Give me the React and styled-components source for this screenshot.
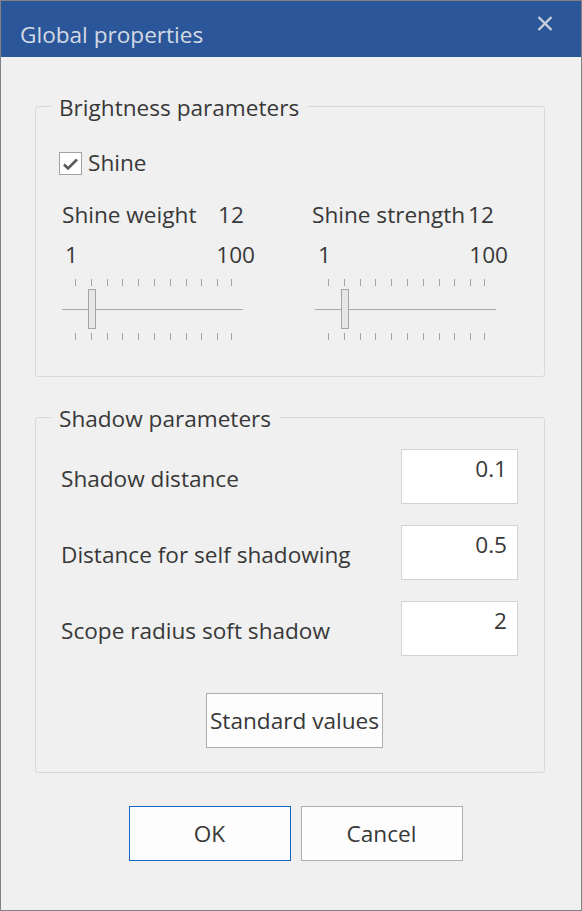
import React from "react";
import styled, { createGlobalStyle } from "styled-components";

const GlobalStyle = createGlobalStyle`
  html, body {
    margin: 0;
    padding: 0;
    background: #f0f0f0;
  }
  body {
    font-family: "Open Sans", "Noto Sans", "Liberation Sans", sans-serif;
    font-size: 22.6px;
    line-height: 30px;
    color: #383838;
  }
`;

// ticks sit at value 1, 11, 21 ... 91 and 100
const tickValues = [1, 11, 21, 31, 41, 51, 61, 71, 81, 91, 100];
const valueToX = (v) => 13 + (v - 1) * 1.58;

const Ticks = () => (
  <TickSvg width="181" height="7" viewBox="0 0 181 7">
    {tickValues.map((v) => (
      <line
        key={v}
        x1={Math.round(valueToX(v)) + 0.5}
        x2={Math.round(valueToX(v)) + 0.5}
        y1="0"
        y2="7"
        stroke="#a3a3a3"
        strokeWidth="1"
      />
    ))}
  </TickSvg>
);

const Slider = ({ value }) => (
  <SliderWrap>
    <Ticks />
    <TrackArea>
      <Track />
      <Thumb style={{ left: Math.round(valueToX(value)) - 4 }} />
    </TrackArea>
    <Ticks />
  </SliderWrap>
);

const SliderColumn = ({ label, value, shift }) => (
  <Column>
    <LabelRow $shift={shift}>
      <SliderLabel>{label}</SliderLabel>
      <span>{value}</span>
    </LabelRow>
    <RangeRow>
      <span>1</span>
      <span>100</span>
    </RangeRow>
    <Slider value={value} />
  </Column>
);

const FieldRow = ({ label, value }) => (
  <Row>
    <RowLabel>{label}</RowLabel>
    <ValueInput readOnly value={value} />
  </Row>
);

export default function App() {
  return (
    <>
      <GlobalStyle />
      <Window>
        <TitleBar>
          <Title>Global properties</Title>
          <CloseButton aria-label="Close">
            <svg width="16" height="15" viewBox="0 0 16 15">
              <path
                d="M1.5 1 L14.5 14 M14.5 1 L1.5 14"
                stroke="#c9cfd8"
                strokeWidth="2.4"
                fill="none"
              />
            </svg>
          </CloseButton>
        </TitleBar>

        <Body>
          <Group>
            <Legend>Brightness parameters</Legend>
            <BrightnessContent>
              <CheckRow>
                <CheckBox>
                  <svg width="21" height="21" viewBox="0 0 21 21">
                    <polyline
                      points="4,11.5 8,15.5 17,6.5"
                      stroke="#5a5a5a"
                      strokeWidth="2.6"
                      fill="none"
                    />
                  </svg>
                </CheckBox>
                <span>Shine</span>
              </CheckRow>
              <Columns>
                <SliderColumn label="Shine weight" value={12} shift={0} />
                <SliderColumn label="Shine strength" value={12} shift={-3} />
              </Columns>
            </BrightnessContent>
          </Group>

          <Group $spaced>
            <Legend>Shadow parameters</Legend>
            <ShadowContent>
              <FieldRow label="Shadow distance" value="0.1" />
              <FieldRow label="Distance for self shadowing" value="0.5" />
              <FieldRow label="Scope radius soft shadow" value="2" />
              <ResetRow>
                <Button $compact>Standard values</Button>
              </ResetRow>
            </ShadowContent>
          </Group>

          <Footer>
            <Button $primary>OK</Button>
            <Button>Cancel</Button>
          </Footer>
        </Body>
      </Window>
    </>
  );
}

const Window = styled.div`
  box-sizing: border-box;
  width: 582px;
  height: 911px;
  border: 1px solid #828282;
  background: #f0f0f0;
  display: flex;
  flex-direction: column;
`;

const TitleBar = styled.div`
  height: 56px;
  background: #2b579a;
  display: flex;
  justify-content: space-between;
  align-items: flex-start;
  padding: 19px 28px 0 19px;
  box-sizing: border-box;
`;

const Title = styled.div`
  color: #d3dae4;
  line-height: 30px;
`;

const CloseButton = styled.div`
  margin-top: -4px;
  width: 16px;
  height: 15px;
  display: flex;
`;

const Body = styled.div`
  flex: 1;
  padding: 0 36px 0 34px;
  display: flex;
  flex-direction: column;
`;

const Group = styled.fieldset`
  margin: ${(p) => (p.$spaced ? "24px" : "33px")} 0 0;
  padding: 0;
  border: 1px solid #d9d9d9;
  border-radius: 3px;
  min-width: 0;
`;

const Legend = styled.legend`
  margin-left: 15px;
  padding: 3px 8px 0;
  line-height: 30px;
  color: #383838;
`;

const BrightnessContent = styled.div`
  padding: 25px 20px 36px 23px;
`;

const CheckRow = styled.div`
  display: flex;
  align-items: center;
  gap: 6px;
  height: 30px;
`;

const CheckBox = styled.div`
  box-sizing: border-box;
  width: 23px;
  height: 23px;
  border: 1px solid #a2a2a2;
  background: #ffffff;
  display: flex;
`;

const Columns = styled.div`
  margin-top: 22px;
  padding-left: 3px;
  display: grid;
  grid-template-columns: 253px 181px;
`;

const Column = styled.div`
  display: flex;
  flex-direction: column;
`;

const LabelRow = styled.div`
  display: flex;
  white-space: nowrap;
  margin-left: ${(p) => p.$shift}px;
`;

const SliderLabel = styled.span`
  min-width: 156px;
`;

const RangeRow = styled.div`
  margin-top: 10px;
  width: 190px;
  padding-left: 3px;
  display: flex;
  justify-content: space-between;
`;

const SliderWrap = styled.div`
  margin-top: 9px;
  width: 181px;
  display: flex;
  flex-direction: column;
`;

const TickSvg = styled.svg`
  display: block;
`;

const TrackArea = styled.div`
  position: relative;
  height: 40px;
  margin: 3px 0 4px;
`;

const Track = styled.div`
  position: absolute;
  left: 0;
  right: 0;
  top: 20px;
  height: 1px;
  background: #a8a8a8;
`;

const Thumb = styled.div`
  position: absolute;
  top: 0;
  box-sizing: border-box;
  width: 8px;
  height: 40px;
  border: 1px solid #a4a4a4;
  background: #e6e6e6;
`;

const ShadowContent = styled.div`
  padding: 15px 26px 24px 25px;
  display: flex;
  flex-direction: column;
  gap: 21px;
`;

const Row = styled.div`
  display: flex;
  align-items: center;
  justify-content: space-between;
`;

const RowLabel = styled.span`
  margin-top: 4px;
`;

const ValueInput = styled.input`
  box-sizing: border-box;
  width: 117px;
  height: 55px;
  padding: 3px 10px 20px;
  border: 1px solid #d3d3d3;
  background: #ffffff;
  font-family: inherit;
  font-size: inherit;
  line-height: 30px;
  color: #383838;
  text-align: right;
  outline: none;
`;

const ResetRow = styled.div`
  margin-top: 16px;
  display: flex;
  justify-content: center;
  padding-left: 10px;
`;

const Button = styled.button`
  box-sizing: border-box;
  height: 55px;
  width: ${(p) => (p.$compact ? "auto" : "162px")};
  padding: 0 ${(p) => (p.$compact ? "3px" : "0")};
  border: 1px solid ${(p) => (p.$primary ? "#1766c2" : "#adadad")};
  background: #fdfdfd;
  font-family: inherit;
  font-size: inherit;
  line-height: 30px;
  color: #383838;
`;

const Footer = styled.div`
  margin-top: 33px;
  display: flex;
  justify-content: center;
  gap: 10px;
  padding-left: 11px;
`;
